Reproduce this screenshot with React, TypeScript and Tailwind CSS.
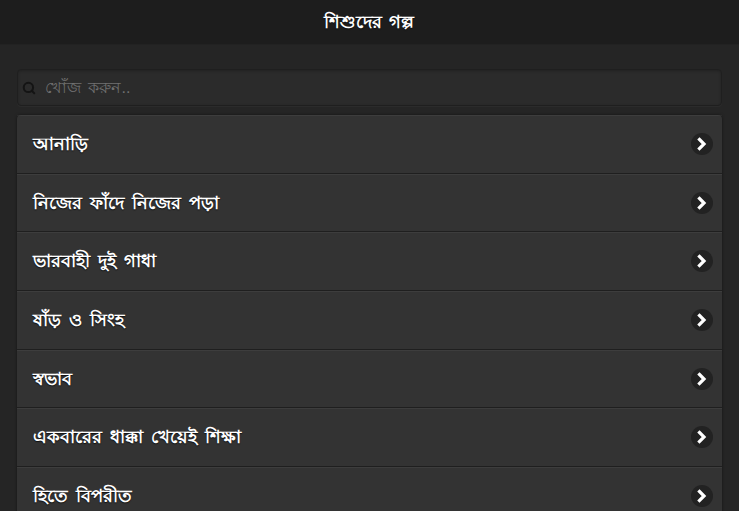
import { Search } from 'lucide-react'

const STORIES = [
  'আনাড়ি',
  'নিজের ফাঁদে নিজের পড়া',
  'ভারবাহী দুই গাধা',
  'ষাঁড় ও সিংহ',
  'স্বভাব',
  'একবারের ধাক্কা খেয়েই শিক্ষা',
  'হিতে বিপরীত',
]

export default function App() {
  return (
    <div className="h-[511px] overflow-hidden bg-[#252525] font-['Liberation_Sans','Noto_Sans',sans-serif]">
      {/* Header */}
      <div className="h-[45px] bg-[#1d1d1d] border-b border-[#222] flex items-center justify-center">
        <h1 className="text-[18px] font-bold text-white [word-spacing:2px] [text-shadow:0_1px_1px_#111]">শিশুদের গল্প</h1>
      </div>

      <div className="px-[17px] pt-[24px]">
        {/* Search */}
        <div className="h-[37px] flex items-center rounded-[4px] bg-[#2b2b2b] border border-[#1f1f1f] shadow-[inset_0_1px_3px_rgba(0,0,0,0.25),0_1px_0_rgba(255,255,255,0.03)]">
          <Search size={14} strokeWidth={3.5} className="ml-[4px] text-[#141414]" />
          <span className="ml-[9px] text-[16px] text-[#707070] [word-spacing:3px]">খোঁজ করুন..</span>
        </div>

        {/* Story list */}
        <ul className="mt-[9px] rounded-[4px] bg-[#333] shadow-[0_0_3px_rgba(0,0,0,0.5)]">
          {STORIES.map(story => (
            <li
              key={story}
              className="h-[58.7px] flex items-center justify-between pl-[16px] pr-[9px] border-b border-[#1f1f1f] shadow-[inset_0_1px_0_rgba(255,255,255,0.05)]"
            >
              <span className="pt-[1px] text-[18px] font-bold text-white [word-spacing:3px] [text-shadow:0_1px_1px_#111]">{story}</span>
              <span className="w-[22px] h-[22px] rounded-full bg-[#222] flex items-center justify-center">
                <svg width="14" height="14" viewBox="0 0 14 14" fill="none" stroke="white" strokeWidth="3.2" strokeLinecap="square">
                  <path d="M4.5 2.5 9 7l-4.5 4.5" />
                </svg>
              </span>
            </li>
          ))}
        </ul>
      </div>
    </div>
  )
}
